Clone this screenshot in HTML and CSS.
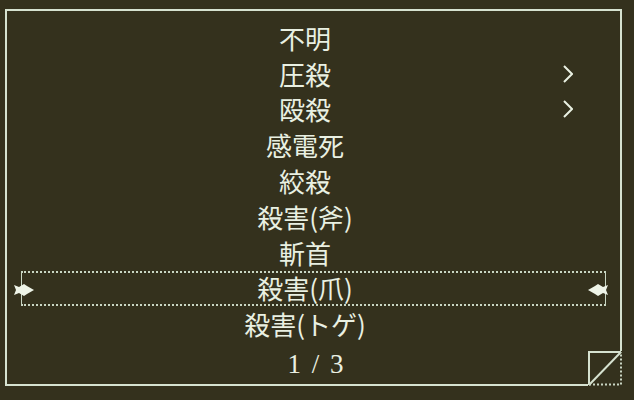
FILE: index.html
```html
<!DOCTYPE html>
<html lang="ja">
<head>
    <meta charset="UTF-8">
    <meta name="viewport" content="width=device-width, initial-scale=1.0">
    <title>死因</title>
    <link rel="stylesheet" href="styles.css">
</head>
<body>
    <div class="window">
        <ul class="menu">
            <li class="item"><span class="label">不明</span></li>
            <li class="item"><span class="label">圧殺</span><svg class="more" viewBox="0 0 10 18"><polyline points="1,1 9,9 1,17"/></svg></li>
            <li class="item"><span class="label">殴殺</span><svg class="more" viewBox="0 0 10 18"><polyline points="1,1 9,9 1,17"/></svg></li>
            <li class="item"><span class="label">感電死</span></li>
            <li class="item"><span class="label">絞殺</span></li>
            <li class="item"><span class="label">殺害(斧)</span></li>
            <li class="item"><span class="label">斬首</span></li>
            <li class="item selected">
                <!-- カーソル(左右) -->
                <svg class="cursor left" viewBox="0 0 20 12"><path d="M0,1 L5,3 L10,0 L13,2 L20,6 L13,10 L10,12 L5,9 L0,11 L2,6 Z"/></svg>
                <span class="label">殺害(爪)</span>
                <svg class="cursor right" viewBox="0 0 20 12"><path d="M0,1 L5,3 L10,0 L13,2 L20,6 L13,10 L10,12 L5,9 L0,11 L2,6 Z"/></svg>
            </li>
            <li class="item"><span class="label">殺害(トゲ)</span></li>
        </ul>
        <div class="page">1 / 3</div>

        <!-- 右下の折り返し -->
        <svg class="fold" viewBox="0 0 34 35">
            <rect x="0" y="0" width="34" height="35" fill="#34311d"/>
            <polyline class="solid" points="1,34 1,1 33,1"/>
            <line class="solid" x1="1" y1="34" x2="33" y2="1"/>
            <polyline class="dots" points="1,33.5 33,33.5 33,1"/>
        </svg>
    </div>
</body>
</html>
```

FILE: styles.css
```css
* {
    box-sizing: border-box;
}
body {
    margin: 0;
    background-color: #34311d;
    color: #e9f0e2;
    font-family: "Noto Sans CJK JP", "Noto Sans", sans-serif;
}
.window {
    position: relative;
    margin: 9px 12px 14px 5px;
    height: 377px;
    border: 2px solid #d6e2d0;
}
.menu {
    list-style: none;
    margin: 0;
    padding: 9px 14px 0 14px;
}
.item {
    position: relative;
    display: grid;
    grid-template-columns: 1fr auto 1fr;
    align-items: center;
    height: 35.8px;
    font-size: 26px;
    line-height: 1;
}
.label {
    grid-column: 2;
    padding-right: 17px;
}
.more {
    grid-column: 3;
    justify-self: end;
    margin-right: 33px;
    width: 10px;
    height: 18px;
    fill: none;
    stroke: #e9f0e2;
    stroke-width: 2;
}
.selected {
    border-top: 2px dotted #c9d6c3;
    border-bottom: 2px dotted #c9d6c3;
    border-left: 1px solid #c9d6c3;
    border-right: 1px solid #c9d6c3;
}
.cursor {
    position: absolute;
    top: 50%;
    width: 20px;
    height: 12px;
    margin-top: -4px;
    fill: #eef4e8;
}
.cursor.left {
    left: -8px;
}
.cursor.right {
    right: -3px;
    transform: scaleX(-1);
}
.page {
    margin-top: 4px;
    height: 36px;
    line-height: 36px;
    text-align: center;
    font-family: "Liberation Serif", serif;
    font-size: 27px;
    letter-spacing: 2px;
    padding-left: 6px;
}
.fold {
    position: absolute;
    right: -2px;
    bottom: -2px;
    width: 34px;
    height: 35px;
}
.fold .solid {
    fill: none;
    stroke: #d6e2d0;
    stroke-width: 2;
}
.fold .dots {
    fill: none;
    stroke: #c9d6c3;
    stroke-width: 2;
    stroke-dasharray: 2 2;
}
```
